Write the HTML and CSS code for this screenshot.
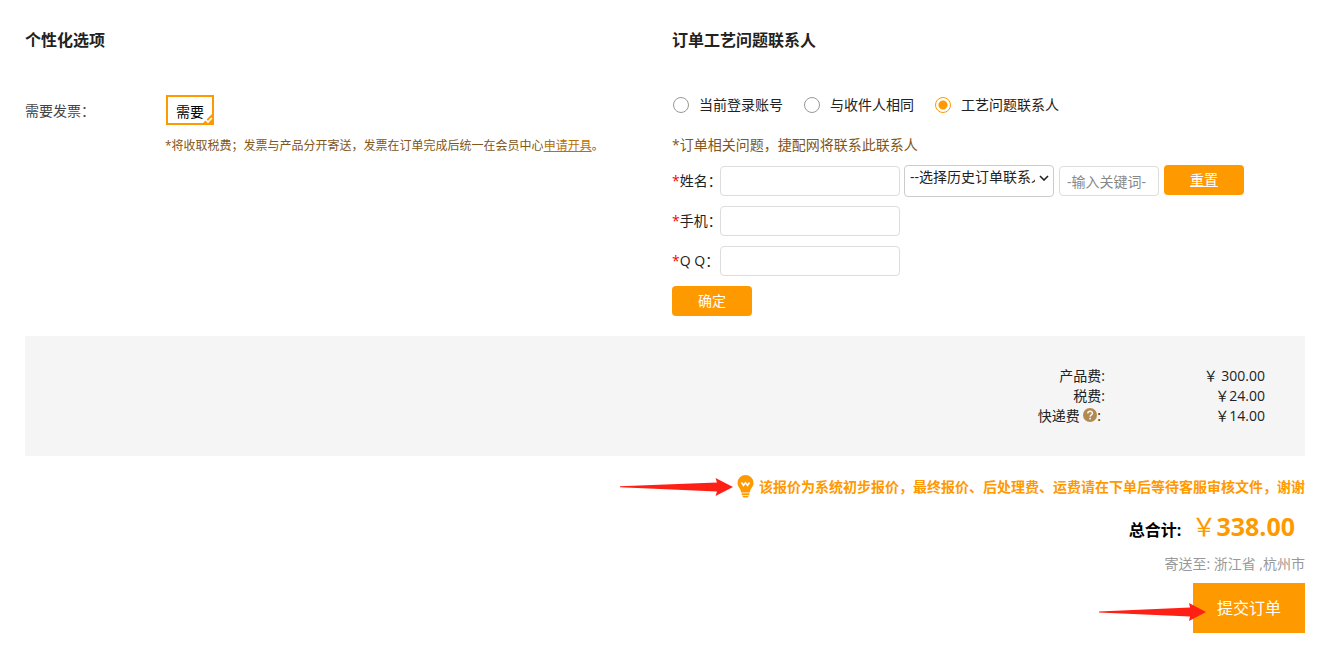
FILE: index.html
```html
<!DOCTYPE html>
<html lang="zh-CN">

<head>
	<meta charset="utf-8">
	<title>提交订单</title>
	<link rel="stylesheet" href="styles.css">
</head>

<body>
	<form class="order">
		<div class="columns">
			<div class="options">
				<h2>个性化选项</h2>
				<div class="invoice">
					<span class="invoiceLabel">需要发票：</span>
					<div class="invoiceMain">
						<button type="button" class="choice" aria-pressed="true">需要
							<svg class="tick" width="11" height="11" viewBox="0 0 11 11">
								<path d="M11 0v11H0z" fill="#f90" />
								<path d="M3.500 6.500l2.500 2.500L9.800 5" fill="none" stroke="#fff" stroke-width="1.600" />
							</svg>
						</button>
						<p class="note">*将收取税费；发票与产品分开寄送，发票在订单完成后统一在会员中心<a href="#">申请开具</a>。</p>
					</div>
				</div>
			</div>

			<div class="contact">
				<h2>订单工艺问题联系人</h2>
				<div class="radios">
					<label><input type="radio" name="who">当前登录账号</label>
					<label><input type="radio" name="who">与收件人相同</label>
					<label><input type="radio" name="who" checked>工艺问题联系人</label>
				</div>
				<p class="hint">*订单相关问题，捷配网将联系此联系人</p>
				<div class="row">
					<label for="name"><i>*</i>姓名：</label>
					<input type="text" id="name" class="text">
					<div class="history">
						<select aria-label="选择历史订单联系人">
							<option>--选择历史订单联系人--</option>
						</select>
						<svg width="10" height="6" viewBox="0 0 10 6">
							<path d="M1 1l4 4 4-4" fill="none" stroke="#222" stroke-width="1.600" />
						</svg>
					</div>
					<input type="text" class="text keyword" placeholder="-输入关键词-" aria-label="输入关键词">
					<button type="reset" class="btn reset">重置</button>
				</div>
				<div class="row">
					<label for="phone"><i>*</i>手机：</label>
					<input type="text" id="phone" class="text">
				</div>
				<div class="row">
					<label for="qq"><i>*</i>Q Q：</label>
					<input type="text" id="qq" class="text">
				</div>
				<div class="row">
					<button type="button" class="btn">确定</button>
				</div>
			</div>
		</div>

		<dl class="fees">
			<dt>产品费:</dt>
			<dd>￥ 300.00</dd>
			<dt>税费:</dt>
			<dd>￥24.00</dd>
			<dt class="express">快递费
				<svg width="14" height="14" viewBox="0 0 14 14">
					<circle cx="7" cy="7" r="7" fill="#b18a51" />
					<path d="M4.800 5.400c0-3 4.600-2.900 4.600-.2 0 1.700-2.300 1.700-2.300 3.500" fill="none" stroke="#f5f5f5" stroke-width="1.500" />
					<rect x="6.300" y="9.800" width="1.600" height="1.600" fill="#f5f5f5" />
				</svg>:</dt>
			<dd>￥14.00</dd>
		</dl>

		<div class="summary">
			<p class="tip">
				<svg class="arrow" width="114" height="18" viewBox="0 0 114 18">
					<path d="M0 8.300L97 4.500 95.500 0 113 9 95.500 18 97 13.500 0 9.300z" fill="#ff2015" />
				</svg>
				<svg class="bulb" width="17" height="23" viewBox="0 0 16 23">
					<path d="M8 0a8 8 0 0 1 8 8c0 4-3.400 5.300-3.600 9.500H3.600C3.400 13.300 0 12 0 8a8 8 0 0 1 8-8z" fill="#f90" />
					<path d="M4 7.500l2 2.800 2-2.500 2 2.500 2-2.800" fill="none" stroke="#fff" stroke-width="1.700" />
					<path d="M4.200 18.300h7.600v1.700H4.200zM4.500 20.700h7l-1.500 1.800h-4z" fill="#f90" />
				</svg>
				<span>该报价为系统初步报价，最终报价、后处理费、运费请在下单后等待客服审核文件，谢谢</span>
			</p>
			<p class="total"><strong>总合计:</strong><span class="amount">￥<b>338.00</b></span></p>
			<p class="address">寄送至: 浙江省 ,杭州市</p>
			<div class="submitBox">
				<button type="submit" class="submit">提交订单</button>
				<svg class="arrow" width="108" height="18" viewBox="0 0 108 18">
					<path d="M0 8.500L91 4.500 90 0 107 9 90 18 91 13.500 0 9.500z" fill="#ff2015" />
				</svg>
			</div>
		</div>
	</form>
</body>

</html>
```
FILE: styles.css
```css
* {
	margin: 0;
	padding: 0;
	box-sizing: border-box;
}

body {
	font: 14px/20px "Open Sans", "Noto Sans CJK SC", sans-serif;
	color: #222;
	background: #fff;
}

button,
input,
select {
	font: inherit;
	color: inherit;
}

button {
	cursor: pointer;
}

h2 {
	font-size: 16px;
	line-height: 20px;
}

.order {
	padding: 30px 31px 20px 25px;
}

.columns {
	display: grid;
	grid-template-columns: 1fr 1fr;
	gap: 14px;
}

/* 发票 */
.invoice {
	display: flex;
	padding-top: 45px;
}

.invoiceLabel {
	flex: 0 0 140px;
	padding-top: 6px;
	color: #444;
}

.invoiceMain {
	flex: 1;
}

.choice {
	position: relative;
	display: block;
	width: 48px;
	height: 30px;
	margin-left: 1px;
	padding-top: 4px;
	border: 2px solid #f90;
	background: #fff;
	color: #000;
}

.tick {
	position: absolute;
	right: -1px;
	bottom: -1px;
}

.note {
	margin-top: 11px;
	font-size: 12px;
	color: #815618;
}

.note a {
	color: #b87000;
}

/* 联系人 */
.radios {
	display: flex;
	gap: 21px;
	padding: 45px 0 0 1px;
}

.radios label {
	display: flex;
	align-items: center;
	gap: 10px;
}

.radios input {
	appearance: none;
	width: 16px;
	height: 16px;
	border: 1px solid #999;
	border-radius: 50%;
}

.radios input:checked {
	border-color: #f90;
	background: radial-gradient(circle, #f90 4px, #fff 5px);
}

.hint {
	margin: 20px 0 10px;
	color: #815618;
}

.row {
	display: flex;
	align-items: center;
	height: 32px;
	margin-bottom: 8px;
}

.row label {
	width: 48px;
	white-space: nowrap;
}

.row i {
	font-style: normal;
	color: #f00;
}

.text {
	width: 180px;
	height: 30px;
	padding: 0 7px;
	border: 1px solid #ddd;
	border-radius: 4px;
}

.keyword {
	width: 100px;
	margin: 0 5px;
}

.keyword::placeholder {
	color: #888;
}

.history {
	position: relative;
	margin-left: 4px;
}

.history select {
	appearance: none;
	display: block;
	width: 150px;
	height: 32px;
	padding: 0 18px 8px 5px;
	border: 1px solid #ccc;
	border-radius: 4px;
	background: #fff;
}

.history svg {
	position: absolute;
	top: 10px;
	right: 5px;
}

.btn {
	width: 80px;
	height: 30px;
	border: 0;
	border-radius: 4px;
	background: #f90;
	color: #fff;
}

.reset {
	align-self: flex-start;
	text-decoration: underline;
}

/* 费用 */
.fees {
	display: grid;
	grid-template-columns: 1fr 160px;
	margin-top: 11px;
	padding: 30px 40px;
	background: #f5f5f5;
	text-align: right;
}

.express {
	padding-right: 4px;
}

.express svg {
	vertical-align: -1px;
}

/* 合计 */
.summary {
	display: flex;
	flex-direction: column;
	align-items: flex-end;
}

.tip {
	position: relative;
	display: flex;
	align-items: center;
	gap: 5px;
	margin-top: 19px;
	font-weight: bold;
	color: #f90;
}

.arrow {
	position: absolute;
	right: 100%;
}

.tip .arrow {
	margin-right: 3px;
}

.total {
	display: flex;
	align-items: baseline;
	gap: 10px;
	margin-top: 10px;
	padding-right: 10px;
	line-height: 36px;
	color: #000;
}

.total strong {
	font-size: 16px;
}

.amount {
	font-size: 25px;
	color: #f90;
}

.address {
	margin: 6px 0 9px;
	color: #999;
}

.submitBox {
	position: relative;
}

.submitBox .arrow {
	top: 20px;
	margin-right: -14px;
}

.submit {
	width: 112px;
	height: 50px;
	border: 0;
	background: #f90;
	color: #fff;
	font-size: 16px;
}
```
